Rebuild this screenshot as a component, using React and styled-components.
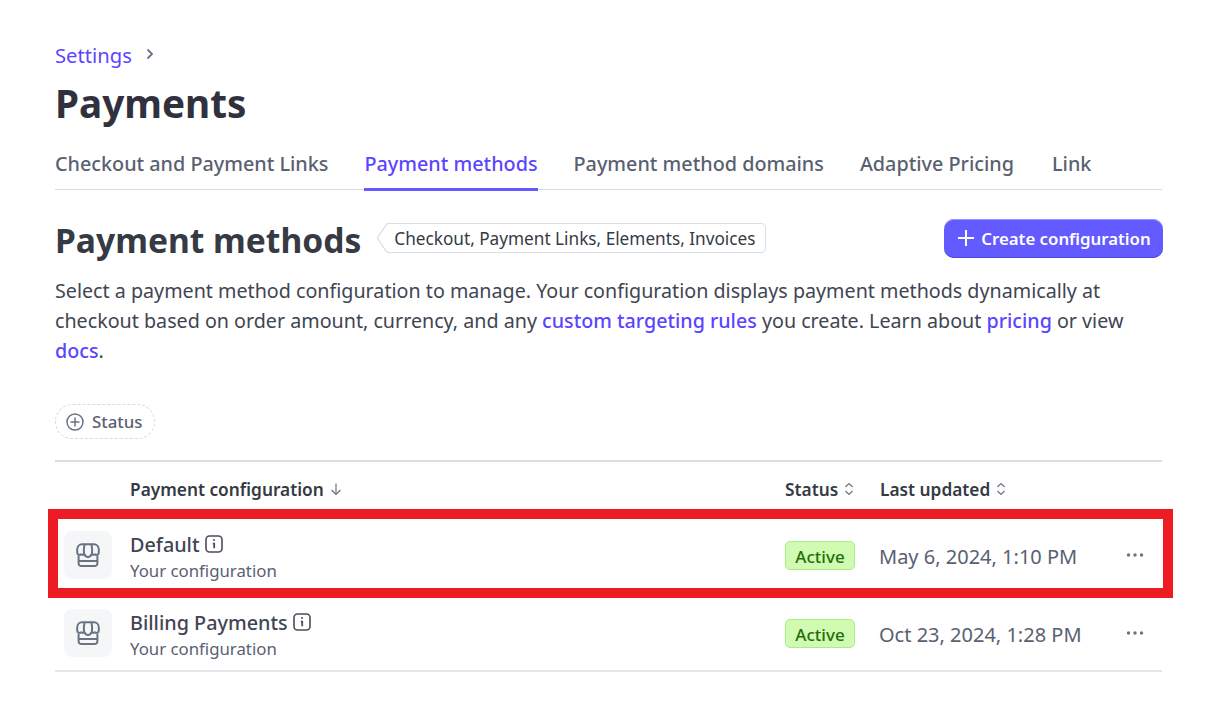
import styled, { createGlobalStyle } from 'styled-components';

const rows = [
  { name: 'Default', date: 'May 6, 2024, 1:10 PM' },
  { name: 'Billing Payments', date: 'Oct 23, 2024, 1:28 PM' },
];

const tabs = ['Checkout and Payment Links', 'Payment methods', 'Payment method domains', 'Adaptive Pricing', 'Link'];

function StoreIcon() {
  return (
    <svg width="24" height="24" viewBox="0 0 24 24" fill="none" stroke="#6a7383" strokeWidth="2" strokeLinejoin="round">
      <path d="M6 1.200h12c2.800 0 4.800 2.500 4.800 5.300v3a2.400 2.400 0 0 1-4 1.800 3 3 0 0 1-3.400 0 3.500 3.500 0 0 1-6.800 0 3 3 0 0 1-3.400 0 2.400 2.400 0 0 1-4-1.800v-3C1.200 3.700 3.200 1.200 6 1.200z" />
      <path d="M8.500 1.500C7.800 4.500 7.700 8 8 11.500M15.500 1.500c.7 3 .8 6.500.5 10" />
      <path d="M2.600 12.500v8a2.800 2.800 0 0 0 2.800 2.500h13.200a2.800 2.800 0 0 0 2.800-2.500v-8" />
      <path d="M2.600 18h18.800" />
    </svg>
  );
}

function InfoIcon() {
  return (
    <svg width="18" height="18" viewBox="0 0 18 18" fill="none" stroke="#474e5a" strokeWidth="1.600">
      <rect x="1" y="1" width="16" height="16" rx="3.500" />
      <path d="M7.800 8.700H9.200V13.200" strokeWidth="1.800" />
      <circle cx="9" cy="5" r="1" fill="#474e5a" stroke="none" />
    </svg>
  );
}

function SortIcon() {
  return (
    <svg width="10" height="14" viewBox="0 0 10 14" fill="none" stroke="#6a7383" strokeWidth="1.200">
      <path d="M1.500 5 5 1.500 8.500 5M1.500 9 5 12.500 8.500 9" />
    </svg>
  );
}

function DotsIcon() {
  return (
    <svg width="18" height="4" viewBox="0 0 18 4" fill="#6a7383">
      <circle cx="2.500" cy="2" r="1.700" />
      <circle cx="9" cy="2" r="1.700" />
      <circle cx="15.500" cy="2" r="1.700" />
    </svg>
  );
}

export default function App() {
  return (
    <>
      <GlobalStyle />
      <Page>
        <Breadcrumb>
          <a>Settings</a>
          <svg width="10" height="14" viewBox="0 0 10 14" fill="none" stroke="#6a7383" strokeWidth="1.800">
            <path d="M2.500 2.500 7 7l-4.500 4.500" />
          </svg>
        </Breadcrumb>
        <PageTitle>Payments</PageTitle>
        <Tabs>
          {tabs.map((tab) => (
            <Tab key={tab} $active={tab === 'Payment methods'}>{tab}</Tab>
          ))}
        </Tabs>
        <SectionHead>
          <SectionTitle>Payment methods</SectionTitle>
          <Tag>
            <svg width="12" height="30" viewBox="0 0 12 30" fill="none" stroke="#d8dee4" strokeWidth="1.200">
              <path d="M12 .6h-.8c-.8 0-1.400.3-1.900 1L1 13.800c-.5.700-.5 1.700 0 2.400l8.300 12.200c.5.700 1.100 1 1.900 1h.8" />
            </svg>
            <TagLabel>Checkout, Payment Links, Elements, Invoices</TagLabel>
          </Tag>
          <CreateButton>
            <svg width="18" height="18" viewBox="0 0 18 18" fill="none" stroke="#fff" strokeWidth="2">
              <path d="M9 1v16M1 9h16" />
            </svg>
            Create configuration
          </CreateButton>
        </SectionHead>
        <Intro>
          Select a payment method configuration to manage. Your configuration displays payment methods dynamically at
          checkout based on order amount, currency, and any <a>custom targeting rules</a> you create. Learn about{' '}
          <a>pricing</a> or view <a>docs</a>.
        </Intro>
        <FilterChip>
          <svg width="18" height="18" viewBox="0 0 18 18" fill="none" stroke="#6a7383" strokeWidth="1.500">
            <circle cx="9" cy="9" r="8" />
            <path d="M9 4.500v9M4.500 9h9" />
          </svg>
          Status
        </FilterChip>
        <Table>
          <HeaderRow>
            <span />
            <HeaderCell>
              Payment configuration
              <svg width="12" height="14" viewBox="0 0 12 14" fill="none" stroke="#6a7383" strokeWidth="1.200">
                <path d="M6 1.500v11M1.500 8 6 12.500 10.500 8" />
              </svg>
            </HeaderCell>
            <HeaderCell>Status <SortIcon /></HeaderCell>
            <HeaderCell>Last updated <SortIcon /></HeaderCell>
            <span />
          </HeaderRow>
          {rows.map((row) => (
            <Row key={row.name}>
              <IconTile><StoreIcon /></IconTile>
              <NameCell>
                <RowName>{row.name} <InfoIcon /></RowName>
                <RowSub>Your configuration</RowSub>
              </NameCell>
              <div><ActiveBadge>Active</ActiveBadge></div>
              <DateCell>{row.date}</DateCell>
              <Actions><DotsIcon /></Actions>
            </Row>
          ))}
        </Table>
        <Highlight />
      </Page>
    </>
  );
}

const GlobalStyle = createGlobalStyle`
  html, body {
    margin: 0;
    background: #fff;
  }
  body {
    font-family: "Noto Sans", "Open Sans", sans-serif;
    color: #353a44;
  }
`;

const Page = styled.div`
  position: relative;
  width: 1220px;
  height: 715px;
  box-sizing: border-box;
  padding: 40px 58px 0 55px;
  overflow: hidden;
`;

const Breadcrumb = styled.div`
  display: flex;
  align-items: center;
  gap: 13px;
  height: 30px;
  font-size: 20.2px;
  color: #5b45ff;

  svg {
    margin-top: -3px;
  }
`;

const PageTitle = styled.h1`
  margin: 8px 0 0;
  height: 50px;
  line-height: 50px;
  font-size: 38.700px;
  font-weight: 700;
  color: #30313d;
`;

const Tabs = styled.div`
  display: flex;
  gap: 36px;
  height: 50px;
  margin-top: 11px;
  border-bottom: 1px solid #d8d9e3;
`;

const Tab = styled.div`
  height: 50px;
  line-height: 52px;
  font-size: 19.800px;
  font-weight: 500;
  color: ${(p) => (p.$active ? '#5b45ff' : '#596171')};
  border-bottom: ${(p) => (p.$active ? '3px solid #635bff' : 'none')};
  margin-bottom: -1px;
  margin-top: -1px;

  &:last-child {
    margin-left: 2px;
  }
`;

const SectionHead = styled.div`
  display: flex;
  align-items: center;
  margin-top: 29px;
  height: 38px;
  margin-right: -1px;
`;

const SectionTitle = styled.h2`
  margin: 4px 0 0;
  font-size: 33.600px;
  line-height: 44px;
  font-weight: 700;
  color: #353a44;
`;

const Tag = styled.div`
  display: flex;
  align-items: stretch;
  height: 30px;
  margin: 0 0 0 16px;
`;

const TagLabel = styled.span`
  display: flex;
  align-items: center;
  box-sizing: border-box;
  padding: 0 10px 0 5px;
  border: 1px solid #d8dee4;
  border-left: none;
  border-radius: 0 5px 5px 0;
  font-size: 17.200px;
  color: #353a44;
`;

const CreateButton = styled.button`
  display: flex;
  align-items: center;
  justify-content: center;
  gap: 6px;
  margin-left: auto;
  width: 219px;
  height: 39px;
  padding: 0 0 0 1px;
  border: none;
  border-radius: 10px;
  background: #635bff;
  box-shadow: inset 0 -1px 0 #4f48d6, inset 0 1px 0 #9a95ff;
  color: #fff;
  font-family: inherit;
  font-size: 16.800px;
  font-weight: 600;
`;

const Intro = styled.p`
  margin: 19px 0 0;
  font-size: 19.700px;
  line-height: 30px;
  color: #414552;

  a {
    color: #5b45ff;
    font-weight: 500;
  }
`;

const FilterChip = styled.div`
  display: inline-flex;
  align-items: center;
  gap: 8px;
  box-sizing: border-box;
  width: 100px;
  height: 35px;
  margin-top: 38px;
  padding-left: 10px;
  border: 1px dashed #d5dbe1;
  border-radius: 18px;
  font-size: 16.800px;
  font-weight: 500;
  color: #596171;
`;

const Table = styled.div`
  margin-top: 21px;
  border-top: 2px solid #d8dee4;
  border-bottom: 2px solid #e3e6ea;
`;

const columns = '75px 655px 95px 240px 1fr';

const HeaderRow = styled.div`
  display: grid;
  grid-template-columns: ${columns};
  align-items: center;
  height: 54px;
`;

const HeaderCell = styled.div`
  display: flex;
  align-items: center;
  gap: 6px;
  font-size: 17.300px;
  font-weight: 600;
  color: #353a44;
`;

const Row = styled.div`
  display: grid;
  grid-template-columns: ${columns};
  align-items: center;
  height: 78px;

  &:last-child {
    margin-bottom: -2px;
  }
`;

const IconTile = styled.div`
  display: flex;
  align-items: center;
  justify-content: center;
  width: 48px;
  height: 48px;
  margin-left: 9px;
  border-radius: 8px;
  background: #f5f6f8;
`;

const NameCell = styled.div`
  display: flex;
  flex-direction: column;
  margin-top: 3px;
`;

const RowName = styled.div`
  display: flex;
  align-items: center;
  gap: 5px;
  height: 28px;
  font-size: 19.800px;
  font-weight: 500;
  color: #414552;
`;

const RowSub = styled.div`
  font-size: 16.800px;
  line-height: 25px;
  color: #596171;
`;

const ActiveBadge = styled.span`
  display: inline-block;
  box-sizing: border-box;
  width: 70px;
  height: 29px;
  line-height: 29px;
  text-align: center;
  border: 1px solid #a8ee87;
  border-radius: 5px;
  background: #d1fab3;
  font-size: 17px;
  font-weight: 500;
  color: #217005;
`;

const DateCell = styled.div`
  margin: 2px 0 0 -1px;
  font-size: 20px;
  color: #596171;
`;

const Actions = styled.div`
  display: flex;
  justify-content: flex-end;
  margin: 0 18px 1px 0;
`;

const Highlight = styled.div`
  position: absolute;
  left: 48px;
  top: 509px;
  width: 1125px;
  height: 89px;
  box-sizing: border-box;
  border: 10px solid #ed1c24;
  pointer-events: none;
`;
